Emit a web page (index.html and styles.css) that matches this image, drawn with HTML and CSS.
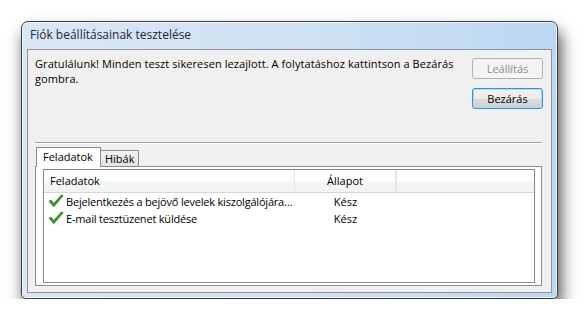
FILE: index.html
```html
<!DOCTYPE html>
<html lang="hu">
  <head>
    <meta charset="UTF-8" />
    <title>Fiók beállításainak tesztelése</title>
    <link rel="stylesheet" href="styles.css">
  </head>
  <body>
    <div class="window">
      <div class="titlebar">Fiók beállításainak tesztelése</div>
      <div class="client">
        <div class="top">
          <p class="message">Gratulálunk! Minden teszt sikeresen lezajlott. A folytatáshoz kattintson a Bezárás gombra.</p>
          <div class="buttons">
            <button class="btn" disabled>Leállítás</button>
            <button class="btn default">Bezárás</button>
          </div>
        </div>
        <div class="separator"></div>
        <div class="tabs">
          <div class="tab active">Feladatok</div>
          <div class="tab">Hibák</div>
        </div>
        <div class="panel">
          <div class="list">
            <div class="list-header">
              <div class="col col-task">Feladatok</div>
              <div class="col col-status">Állapot</div>
              <div class="col col-rest"></div>
            </div>
            <div class="row">
              <div class="cell col-task">
                <svg class="check" width="16" height="14" viewBox="0 0 16 14"><path d="M1 7.2 L3 6 L5.6 9.4 L13.6 0.8 L15.2 1.8 L5.8 12.8 Z" fill="#2e9a1e" stroke="#1d6e12" stroke-width="0.6" stroke-linejoin="round"/></svg>
                <span class="label">Bejelentkezés a bejövő levelek kiszolgálójára…</span>
              </div>
              <div class="cell col-status">Kész</div>
            </div>
            <div class="row">
              <div class="cell col-task">
                <svg class="check" width="16" height="14" viewBox="0 0 16 14"><path d="M1 7.2 L3 6 L5.6 9.4 L13.6 0.8 L15.2 1.8 L5.8 12.8 Z" fill="#2e9a1e" stroke="#1d6e12" stroke-width="0.6" stroke-linejoin="round"/></svg>
                <span class="label">E-mail tesztüzenet küldése</span>
              </div>
              <div class="cell col-status">Kész</div>
            </div>
          </div>
        </div>
      </div>
    </div>
  </body>
</html>
```

FILE: styles.css
```css
html,
body {
  margin: 0;
  padding: 0;
  background: #fff;
}

body {
  font-family: "Open Sans", "Noto Sans", sans-serif;
  font-size: 11px;
  color: #000;
}

.window {
  box-sizing: border-box;
  width: 537px;
  height: 278px;
  margin: 21px 0 0 21px;
  padding: 0 5px 5px 5px;
  border: 1px solid #3a3d42;
  border-radius: 7px 7px 5px 5px;
  background: linear-gradient(to right, #d9e6f4, #cfe1f4 55%, #bcd7f2);
  box-shadow: 3px 10px 16px rgba(0, 0, 0, 0.7), inset 0 0 0 1px rgba(255, 255, 255, 0.7);
  display: flex;
  flex-direction: column;
}

.titlebar {
  height: 27px;
  line-height: 25px;
  padding-left: 3px;
  font-size: 12px;
  color: #1e2936;
}

.client {
  flex: 1;
  border: 1px solid #8a95a1;
  background: #f0f0f0;
  display: flex;
  flex-direction: column;
  padding: 0 8px 4px 7px;
}

.top {
  display: flex;
  justify-content: space-between;
  padding-top: 8px;
}

.message {
  margin: -2px 0 0 0;
  width: 420px;
  line-height: 15px;
  letter-spacing: 0.08px;
}

.buttons {
  display: flex;
  flex-direction: column;
  gap: 9px;
}

.btn {
  box-sizing: border-box;
  width: 71px;
  height: 21px;
  font-family: inherit;
  font-size: 11px;
  padding: 0;
  border: 1px solid #707070;
  border-radius: 3px;
  background: linear-gradient(#f2f2f2, #ebebeb 50%, #dddddd 51%, #cfcfcf);
  color: #000;
}

.btn:disabled {
  border-color: #adb2b5;
  background: #f4f4f4;
  color: #8b8b8b;
}

.btn.default {
  border-color: #3c8fd0;
  box-shadow: inset 0 0 0 1px #a8dcf6;
}

.separator {
  margin-top: 33px;
  height: 1px;
  background: #a0a0a0;
  border-bottom: 1px solid #fff;
  margin-right: 1px;
}

.tabs {
  display: flex;
  align-items: flex-end;
  margin-top: 3px;
  padding-left: 1px;
  height: 19px;
}

.tab {
  box-sizing: border-box;
  height: 16px;
  line-height: 15px;
  padding: 0 4px;
  border: 1px solid #898c95;
  border-bottom: none;
  background: linear-gradient(#f2f2f2, #e3e3e3);
}

.tab.active {
  position: relative;
  z-index: 1;
  height: 20px;
  margin-bottom: -1px;
  padding: 0 7px 0 6px;
  line-height: 17px;
  background: #fff;
  border-right: 1px solid #898c95;
}

.tab.active + .tab {
  border-left: none;
}

.panel {
  box-sizing: border-box;
  height: 120px;
  margin-right: 1px;
  border: 1px solid #898c95;
  background: #fff;
  padding: 2px 6px 2px 7px;
  display: flex;
}

.list {
  flex: 1;
  border: 1px solid #828790;
  background: #fff;
}

.list-header {
  display: flex;
  height: 22px;
  border-bottom: 1px solid #d5d5d5;
  background: linear-gradient(#ffffff, #ffffff 50%, #f5f6f7 51%, #f1f2f4);
}

.list-header .col {
  box-sizing: border-box;
  line-height: 21px;
  border-right: 1px solid #e3e6ea;
}

.col-task {
  box-sizing: border-box;
  width: 251px;
  padding-left: 6px;
}

.col-status {
  box-sizing: border-box;
  width: 101px;
  text-align: center;
}

.list-header .col-rest {
  width: 1px;
}

.row {
  display: flex;
  height: 17px;
  line-height: 17px;
}

.row:first-of-type {
  margin-top: 1px;
}

.cell.col-task {
  display: flex;
  align-items: center;
  padding-left: 4px;
  white-space: nowrap;
}

.check {
  flex: none;
  margin-right: 2px;
  margin-top: -2px;
}

.label {
  letter-spacing: -0.2px;
}
```
